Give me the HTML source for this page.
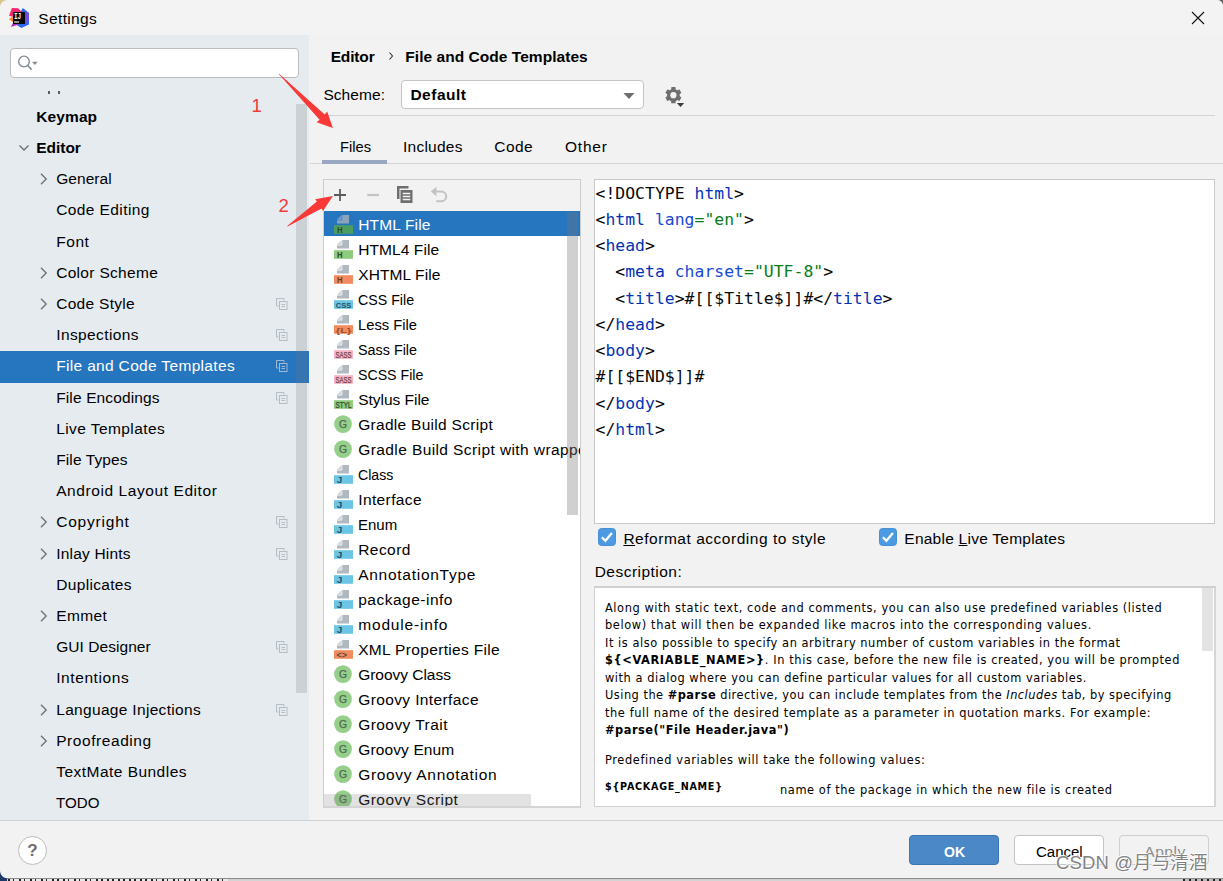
<!DOCTYPE html>
<html lang="en">
<head>
<meta charset="utf-8">
<title>Settings</title>
<style>
html,body{margin:0;padding:0}
body{width:1223px;height:881px;overflow:hidden;position:relative;background:#f2f2f2;font-family:"Liberation Sans",sans-serif;font-size:15.5px;color:#000}
.abs,.t,.i,.sel,.lsel,.cl{position:absolute}
.t{white-space:pre;display:block}
.i{display:block;overflow:visible}
#titlebar{left:0;top:0;width:1223px;height:35px;background:#f3f3f3}
#sidebar{left:0;top:35px;width:309px;height:785px;background:#e6ebf0;overflow:hidden}
#sbin{position:absolute;left:0;top:-35px;width:309px;height:881px}
.sel{left:0;width:309px;background:#2675bf}
#search{left:10px;top:48px;width:287px;height:28px;border:1px solid #bcbcbc;border-radius:4px;background:#fff}
#sbthumb{left:296px;top:104px;width:11px;height:589px;background:rgba(115,120,125,0.22)}
#footer{left:0;top:820px;width:1223px;height:58px;background:#f2f2f2;border-top:1px solid #d1d1d1;box-sizing:border-box}
#below{left:0;top:878px;width:1223px;height:3px;background:linear-gradient(#8c8c8c 0,#8c8c8c 1px,#cdcdcd 1px,#d6d6d6 3px)}
#listpanel{left:323px;top:179px;width:256px;height:626px;border:1px solid #cdcdcd;border-bottom:2px solid #d4d4d4;background:#f2f2f2;overflow:hidden;box-sizing:content-box}
#listbody{left:0;top:31px;width:256px;height:595px;background:#fff}
.lsel{left:0;width:256px;background:#2675bf}
#editor{left:594px;top:179px;width:619px;height:343px;border:1px solid #c9c9c9;background:#fff;overflow:hidden}
.cl{left:0.5px;height:26px;line-height:26px;white-space:pre;font-family:"DejaVu Sans Mono","Liberation Mono",monospace;font-size:16.4px;color:#080808;letter-spacing:0.03px}
#desc{left:594px;top:586px;width:619px;height:218px;border:1px solid #d2d2d2;border-top:2px solid #cfcfcf;border-right:2px solid #d6d6d6;background:#fff;overflow:hidden}
.d{position:absolute;left:10px;white-space:pre;font-family:"DejaVu Sans","Liberation Sans",sans-serif;font-size:11.4px;height:18px;line-height:18px;color:#000}
.btn{position:absolute;top:835px;width:88px;height:28px;border-radius:4px;border:1px solid #c4c4c4;background:#fff}
.cb{position:absolute;width:18px;height:18px;border-radius:3.5px;background:#4c9ae1;border:1px solid #4790d8;box-sizing:border-box}
</style>
</head>
<body>
<div id="titlebar" class="abs"></div>
<div id="sidebar" class="abs"><div id="sbin">
<div id="search" class="abs"></div>
<svg class="i" style="left:17px;top:54px" width="22" height="18" viewBox="0 0 22 18"><circle cx="7" cy="7.5" r="5.3" fill="none" stroke="#7f8b91" stroke-width="1.3"/><path d="M10.8 11.5 L14.6 15.6" stroke="#7f8b91" stroke-width="1.6"/><path d="M15 7.8 h5.6 l-2.8 3.2z" fill="#7f8b91"/></svg>
<div class="abs" style="left:48px;top:90.6px;width:2px;height:3px;background:#5c5c68"></div>
<div class="abs" style="left:58px;top:90.6px;width:2px;height:3px;background:#5c5c68"></div>
<span class="t" style="left:36.3px;top:105.00px;height:24px;line-height:24px;font-size:15.5px;font-weight:700;letter-spacing:0.097px;">Keymap</span>
<span class="t" style="left:36.3px;top:136.00px;height:24px;line-height:24px;font-size:15.5px;font-weight:700;letter-spacing:-0.036px;">Editor</span>
<svg class="i" style="left:17px;top:143.00px" width="14" height="10" viewBox="0 0 14 10"><path d="M2.5 2.5 L7 7 L11.5 2.5" fill="none" stroke="#6e6e6e" stroke-width="1.3"/></svg>
<span class="t" style="left:56.2px;top:167.00px;height:24px;line-height:24px;font-size:15.5px;letter-spacing:0.057px;">General</span>
<svg class="i" style="left:39px;top:172.00px" width="10" height="14" viewBox="0 0 10 14"><path d="M2 1.8 L7.2 7 L2 12.2" fill="none" stroke="#6e6e6e" stroke-width="1.3"/></svg>
<span class="t" style="left:56.2px;top:198.00px;height:24px;line-height:24px;font-size:15.5px;letter-spacing:0.403px;">Code Editing</span>
<span class="t" style="left:56.2px;top:230.00px;height:24px;line-height:24px;font-size:15.5px;letter-spacing:0.561px;">Font</span>
<span class="t" style="left:56.2px;top:261.00px;height:24px;line-height:24px;font-size:15.5px;letter-spacing:0.307px;">Color Scheme</span>
<svg class="i" style="left:39px;top:266.00px" width="10" height="14" viewBox="0 0 10 14"><path d="M2 1.8 L7.2 7 L2 12.2" fill="none" stroke="#6e6e6e" stroke-width="1.3"/></svg>
<span class="t" style="left:56.2px;top:292.00px;height:24px;line-height:24px;font-size:15.5px;letter-spacing:0.297px;">Code Style</span>
<svg class="i" style="left:39px;top:297.00px" width="10" height="14" viewBox="0 0 10 14"><path d="M2 1.8 L7.2 7 L2 12.2" fill="none" stroke="#6e6e6e" stroke-width="1.3"/></svg>
<svg class="i" style="left:276px;top:298.00px" width="12" height="12" viewBox="0 0 12 12"><path d="M0.5 0.5h7.5v2M0.5 0.5v7.5h2" fill="none" stroke="#b4bcc4" stroke-width="1"/><rect x="3.5" y="3.5" width="7.5" height="8" fill="none" stroke="#b4bcc4" stroke-width="1"/><path d="M5.5 6.5h3.5M5.5 8.5h3.5" stroke="#b4bcc4" stroke-width="1"/></svg>
<span class="t" style="left:56.2px;top:323.00px;height:24px;line-height:24px;font-size:15.5px;letter-spacing:0.398px;">Inspections</span>
<svg class="i" style="left:276px;top:329.00px" width="12" height="12" viewBox="0 0 12 12"><path d="M0.5 0.5h7.5v2M0.5 0.5v7.5h2" fill="none" stroke="#b4bcc4" stroke-width="1"/><rect x="3.5" y="3.5" width="7.5" height="8" fill="none" stroke="#b4bcc4" stroke-width="1"/><path d="M5.5 6.5h3.5M5.5 8.5h3.5" stroke="#b4bcc4" stroke-width="1"/></svg>
<div class="sel" style="top:351px;height:32px"></div>
<span class="t" style="left:56.2px;top:354.00px;height:24px;line-height:24px;font-size:15.5px;color:#fff;letter-spacing:0.332px;">File and Code Templates</span>
<svg class="i" style="left:276px;top:360.00px" width="12" height="12" viewBox="0 0 12 12"><path d="M0.5 0.5h7.5v2M0.5 0.5v7.5h2" fill="none" stroke="#9fb9d6" stroke-width="1"/><rect x="3.5" y="3.5" width="7.5" height="8" fill="none" stroke="#9fb9d6" stroke-width="1"/><path d="M5.5 6.5h3.5M5.5 8.5h3.5" stroke="#9fb9d6" stroke-width="1"/></svg>
<span class="t" style="left:56.2px;top:386.00px;height:24px;line-height:24px;font-size:15.5px;letter-spacing:0.133px;">File Encodings</span>
<svg class="i" style="left:276px;top:392.00px" width="12" height="12" viewBox="0 0 12 12"><path d="M0.5 0.5h7.5v2M0.5 0.5v7.5h2" fill="none" stroke="#b4bcc4" stroke-width="1"/><rect x="3.5" y="3.5" width="7.5" height="8" fill="none" stroke="#b4bcc4" stroke-width="1"/><path d="M5.5 6.5h3.5M5.5 8.5h3.5" stroke="#b4bcc4" stroke-width="1"/></svg>
<span class="t" style="left:56.2px;top:417.00px;height:24px;line-height:24px;font-size:15.5px;letter-spacing:0.422px;">Live Templates</span>
<span class="t" style="left:56.2px;top:448.00px;height:24px;line-height:24px;font-size:15.5px;letter-spacing:0.116px;">File Types</span>
<span class="t" style="left:56.2px;top:479.00px;height:24px;line-height:24px;font-size:15.5px;letter-spacing:0.581px;">Android Layout Editor</span>
<span class="t" style="left:56.2px;top:510.00px;height:24px;line-height:24px;font-size:15.5px;letter-spacing:0.795px;">Copyright</span>
<svg class="i" style="left:39px;top:515.00px" width="10" height="14" viewBox="0 0 10 14"><path d="M2 1.8 L7.2 7 L2 12.2" fill="none" stroke="#6e6e6e" stroke-width="1.3"/></svg>
<svg class="i" style="left:276px;top:516.00px" width="12" height="12" viewBox="0 0 12 12"><path d="M0.5 0.5h7.5v2M0.5 0.5v7.5h2" fill="none" stroke="#b4bcc4" stroke-width="1"/><rect x="3.5" y="3.5" width="7.5" height="8" fill="none" stroke="#b4bcc4" stroke-width="1"/><path d="M5.5 6.5h3.5M5.5 8.5h3.5" stroke="#b4bcc4" stroke-width="1"/></svg>
<span class="t" style="left:56.2px;top:542.00px;height:24px;line-height:24px;font-size:15.5px;letter-spacing:0.192px;">Inlay Hints</span>
<svg class="i" style="left:39px;top:547.00px" width="10" height="14" viewBox="0 0 10 14"><path d="M2 1.8 L7.2 7 L2 12.2" fill="none" stroke="#6e6e6e" stroke-width="1.3"/></svg>
<svg class="i" style="left:276px;top:548.00px" width="12" height="12" viewBox="0 0 12 12"><path d="M0.5 0.5h7.5v2M0.5 0.5v7.5h2" fill="none" stroke="#b4bcc4" stroke-width="1"/><rect x="3.5" y="3.5" width="7.5" height="8" fill="none" stroke="#b4bcc4" stroke-width="1"/><path d="M5.5 6.5h3.5M5.5 8.5h3.5" stroke="#b4bcc4" stroke-width="1"/></svg>
<span class="t" style="left:56.2px;top:573.00px;height:24px;line-height:24px;font-size:15.5px;letter-spacing:0.336px;">Duplicates</span>
<span class="t" style="left:56.2px;top:604.00px;height:24px;line-height:24px;font-size:15.5px;letter-spacing:0.352px;">Emmet</span>
<svg class="i" style="left:39px;top:609.00px" width="10" height="14" viewBox="0 0 10 14"><path d="M2 1.8 L7.2 7 L2 12.2" fill="none" stroke="#6e6e6e" stroke-width="1.3"/></svg>
<span class="t" style="left:56.2px;top:635.00px;height:24px;line-height:24px;font-size:15.5px;letter-spacing:0.054px;">GUI Designer</span>
<svg class="i" style="left:276px;top:641.00px" width="12" height="12" viewBox="0 0 12 12"><path d="M0.5 0.5h7.5v2M0.5 0.5v7.5h2" fill="none" stroke="#b4bcc4" stroke-width="1"/><rect x="3.5" y="3.5" width="7.5" height="8" fill="none" stroke="#b4bcc4" stroke-width="1"/><path d="M5.5 6.5h3.5M5.5 8.5h3.5" stroke="#b4bcc4" stroke-width="1"/></svg>
<span class="t" style="left:56.2px;top:666.00px;height:24px;line-height:24px;font-size:15.5px;letter-spacing:0.587px;">Intentions</span>
<span class="t" style="left:56.2px;top:698.00px;height:24px;line-height:24px;font-size:15.5px;letter-spacing:0.319px;">Language Injections</span>
<svg class="i" style="left:39px;top:703.00px" width="10" height="14" viewBox="0 0 10 14"><path d="M2 1.8 L7.2 7 L2 12.2" fill="none" stroke="#6e6e6e" stroke-width="1.3"/></svg>
<svg class="i" style="left:276px;top:704.00px" width="12" height="12" viewBox="0 0 12 12"><path d="M0.5 0.5h7.5v2M0.5 0.5v7.5h2" fill="none" stroke="#b4bcc4" stroke-width="1"/><rect x="3.5" y="3.5" width="7.5" height="8" fill="none" stroke="#b4bcc4" stroke-width="1"/><path d="M5.5 6.5h3.5M5.5 8.5h3.5" stroke="#b4bcc4" stroke-width="1"/></svg>
<span class="t" style="left:56.2px;top:729.00px;height:24px;line-height:24px;font-size:15.5px;letter-spacing:0.567px;">Proofreading</span>
<svg class="i" style="left:39px;top:734.00px" width="10" height="14" viewBox="0 0 10 14"><path d="M2 1.8 L7.2 7 L2 12.2" fill="none" stroke="#6e6e6e" stroke-width="1.3"/></svg>
<span class="t" style="left:56.2px;top:760.00px;height:24px;line-height:24px;font-size:15.5px;letter-spacing:0.472px;">TextMate Bundles</span>
<span class="t" style="left:56.2px;top:791.00px;height:24px;line-height:24px;font-size:15.5px;transform:scaleX(0.9753);transform-origin:0 50%;">TODO</span>
<div id="sbthumb" class="abs"></div>
</div></div>

<!-- title -->
<svg class="i" style="left:0;top:0" width="40" height="36" viewBox="0 0 40 36">

<path d="M11.9 8 L18 8.2 L21.4 11.6 L14 17 L9 15.7z" fill="#f7256b"/>
<path d="M9 19.2 L12.6 16.5 L13.5 22.3z" fill="#fb7a1d"/>
<path d="M10.8 27 L13 23 L19.5 24.3z" fill="#b32bb8"/>
<path d="M22.9 8 L29 13 L29 24.5 L21.3 28 L17 25.3 L20.8 11.5z" fill="#2f68ee"/><path d="M25 11.5 L29 13 L29 21 L25 23z" fill="#6a50e2"/>
<rect x="13" y="12" width="12" height="12" fill="#050505"/>
<text x="14" y="18.8" font-family="Liberation Mono, monospace" font-weight="700" font-size="8.4" fill="#fff" textLength="7.2" lengthAdjust="spacingAndGlyphs">IJ</text>
<rect x="14.1" y="21.3" width="4.9" height="1.4" fill="#cfcfcf"/>
<path d="M0 0 H7 C3 0.6 0.9 2.6 0 6z" fill="#d8c78e"/>
</svg>
<span class="t" style="left:38.3px;top:7.20px;height:24px;line-height:24px;font-size:15.5px;letter-spacing:0.355px;">Settings</span>
<svg class="i" style="left:1191px;top:11px" width="14" height="14" viewBox="0 0 14 14"><path d="M1 1 L13 13 M13 1 L1 13" stroke="#111" stroke-width="1.1" fill="none"/></svg>

<svg class="i" style="left:1218px;top:0" width="5" height="5" viewBox="0 0 5 5"><path d="M5 0 V5 C4.6 2.2 2.8 0.4 0 0z" fill="#5a5a5a"/></svg>
<!-- right header -->
<span class="t" style="left:330.7px;top:44.50px;height:24px;line-height:24px;font-size:15.5px;font-weight:700;letter-spacing:-0.156px;">Editor</span>
<svg class="i" style="left:387px;top:51px" width="8" height="10" viewBox="0 0 8 10"><path d="M2.5 1.5 L5.5 5 L2.5 8.5" fill="none" stroke="#333" stroke-width="1.1"/></svg>
<span class="t" style="left:405.3px;top:44.50px;height:24px;line-height:24px;font-size:15.5px;font-weight:700;letter-spacing:0.043px;">File and Code Templates</span>
<span class="t" style="left:323.4px;top:82.50px;height:24px;line-height:24px;font-size:15.5px;letter-spacing:0.071px;">Scheme:</span>
<div class="abs" style="left:401px;top:80px;width:241px;height:27px;border:1px solid #c4c4c4;border-radius:4px;background:#fff"></div>
<span class="t" style="left:410.4px;top:82.50px;height:24px;line-height:24px;font-size:15.5px;font-weight:700;letter-spacing:0.509px;">Default</span>
<svg class="i" style="left:622.3px;top:91.7px" width="14" height="8" viewBox="0 0 14 8"><path d="M1.5 1 h11 l-5.5 6z" fill="#6e6e6e"/></svg>
<svg class="i" style="left:664px;top:85px" width="22" height="24" viewBox="0 0 22 24">
<g transform="translate(9.4,10.2)" fill="#6e6e6e">
<circle r="6.3" />
<g><rect x="-2.2" y="-8.1" width="4.4" height="16.2" rx="0.6"/><rect x="-2.2" y="-8.1" width="4.4" height="16.2" rx="0.6" transform="rotate(60)"/><rect x="-2.2" y="-8.1" width="4.4" height="16.2" rx="0.6" transform="rotate(120)"/></g>
<circle r="3.1" fill="#f2f2f2"/>
</g>
<path d="M12.8 18 h7.4 l-3.7 4z" fill="#3c3c3c"/>
</svg>
<div class="abs" style="left:323px;top:115px;width:892px;height:1px;background:#d4d4d4"></div>

<!-- tabs -->
<span class="t" style="left:339.7px;top:134.50px;height:24px;line-height:24px;font-size:15.5px;transform:scaleX(0.9470);transform-origin:0 50%;">Files</span>
<span class="t" style="left:403.0px;top:134.50px;height:24px;line-height:24px;font-size:15.5px;letter-spacing:0.238px;">Includes</span>
<span class="t" style="left:494.3px;top:134.50px;height:24px;line-height:24px;font-size:15.5px;letter-spacing:0.412px;">Code</span>
<span class="t" style="left:565.0px;top:134.50px;height:24px;line-height:24px;font-size:15.5px;letter-spacing:0.784px;">Other</span>
<div class="abs" style="left:310px;top:163px;width:913px;height:1px;background:#d4d4d4"></div>
<div class="abs" style="left:322px;top:160px;width:65px;height:4px;background:#99a7c2"></div>

<!-- list panel -->
<div id="listpanel" class="abs">
<svg class="i" style="left:8px;top:7px" width="16" height="16" viewBox="0 0 16 16"><path d="M8 2v12M2 8h12" stroke="#5c5c5c" stroke-width="1.8"/></svg>
<svg class="i" style="left:41px;top:7px" width="16" height="16" viewBox="0 0 16 16"><path d="M2.2 8h11.8" stroke="#c3c3c3" stroke-width="2.2"/></svg>
<svg class="i" style="left:71.7px;top:5px" width="18" height="19" viewBox="0 0 18 19"><path d="M1 1h11.5v2.5h-9v10.5h-2.5z" fill="#6e6e6e"/><rect x="4.5" y="5" width="12" height="13" fill="#6e6e6e"/><path d="M6.7 8.5h7.6M6.7 11.5h7.6M6.7 14.5h7.6" stroke="#f2f2f2" stroke-width="1.3"/></svg>
<svg class="i" style="left:106px;top:5px" width="20" height="20" viewBox="0 0 20 20"><path d="M6 6.5 H11.3 a4.9 4.9 0 0 1 0 9.8 H6.2" fill="none" stroke="#c3c3c3" stroke-width="2.1"/><path d="M0.8 6.5 L6.4 1.8 V11.2z" fill="#c3c3c3"/></svg>
<div id="listbody" class="abs"></div>
<div class="lsel" style="top:31px;height:25px"></div>
<span class="t" style="left:34.2px;top:32.60px;height:24px;line-height:24px;font-size:15.5px;color:#fff;letter-spacing:0.174px;">HTML File</span>
<svg class="i" style="left:10px;top:35.2px" width="19" height="19" viewBox="0 0 19 19"><path d="M8 0h7v8.4h-12v-3.4z" fill="#8aa4bb"/><path d="M7.4 0.2v4.4h-4.4z" fill="#6a9aca"/><path d="M7.9 0v5.1h-4.9" fill="none" stroke="#3f84c6" stroke-width="0.8"/><rect x="0" y="10.2" width="19" height="8.6" fill="#4c9e5f"/><text x="3.0" y="17.7" font-family="Liberation Sans, sans-serif" font-weight="700" font-size="8.6" fill="#2e4a30" stroke="#2e4a30" stroke-width="0" textLength="5.6" lengthAdjust="spacingAndGlyphs">H</text></svg>
<span class="t" style="left:34.2px;top:57.60px;height:24px;line-height:24px;font-size:15.5px;letter-spacing:0.088px;">HTML4 File</span>
<svg class="i" style="left:10px;top:60.2px" width="19" height="19" viewBox="0 0 19 19"><path d="M8 0h7v8.4h-12v-3.4z" fill="#b0b8c0"/><path d="M7.4 0.2v4.4h-4.4z" fill="#d6dade"/><path d="M7.9 0v5.1h-4.9" fill="none" stroke="#fff" stroke-width="0.8"/><rect x="0" y="10.2" width="19" height="8.6" fill="#8fcb7c"/><text x="3.0" y="17.7" font-family="Liberation Sans, sans-serif" font-weight="700" font-size="8.6" fill="#2e4a30" stroke="#2e4a30" stroke-width="0" textLength="5.6" lengthAdjust="spacingAndGlyphs">H</text></svg>
<span class="t" style="left:34.2px;top:82.60px;height:24px;line-height:24px;font-size:15.5px;letter-spacing:0.106px;">XHTML File</span>
<svg class="i" style="left:10px;top:85.2px" width="19" height="19" viewBox="0 0 19 19"><path d="M8 0h7v8.4h-12v-3.4z" fill="#b0b8c0"/><path d="M7.4 0.2v4.4h-4.4z" fill="#d6dade"/><path d="M7.9 0v5.1h-4.9" fill="none" stroke="#fff" stroke-width="0.8"/><rect x="0" y="10.2" width="19" height="8.6" fill="#f28b5e"/><text x="3.0" y="17.7" font-family="Liberation Sans, sans-serif" font-weight="700" font-size="8.6" fill="#6e3a22" stroke="#6e3a22" stroke-width="0" textLength="5.6" lengthAdjust="spacingAndGlyphs">H</text></svg>
<span class="t" style="left:34.2px;top:107.60px;height:24px;line-height:24px;font-size:15.5px;transform:scaleX(0.9173);transform-origin:0 50%;">CSS File</span>
<svg class="i" style="left:10px;top:110.2px" width="19" height="19" viewBox="0 0 19 19"><path d="M8 0h7v8.4h-12v-3.4z" fill="#b0b8c0"/><path d="M7.4 0.2v4.4h-4.4z" fill="#d6dade"/><path d="M7.9 0v5.1h-4.9" fill="none" stroke="#fff" stroke-width="0.8"/><rect x="0" y="10.2" width="19" height="8.6" fill="#6cc5e4"/><text x="1.8" y="17.7" font-family="Liberation Sans, sans-serif" font-weight="700" font-size="7.3" fill="#255163" stroke="#255163" stroke-width="0" textLength="15.6" lengthAdjust="spacingAndGlyphs">CSS</text></svg>
<span class="t" style="left:34.2px;top:132.60px;height:24px;line-height:24px;font-size:15.5px;transform:scaleX(0.9511);transform-origin:0 50%;">Less File</span>
<svg class="i" style="left:10px;top:135.2px" width="19" height="19" viewBox="0 0 19 19"><path d="M8 0h7v8.4h-12v-3.4z" fill="#b0b8c0"/><path d="M7.4 0.2v4.4h-4.4z" fill="#d6dade"/><path d="M7.9 0v5.1h-4.9" fill="none" stroke="#fff" stroke-width="0.8"/><rect x="0" y="10.2" width="19" height="8.6" fill="#f28b5e"/><text x="1.8" y="17.7" font-family="Liberation Sans, sans-serif" font-weight="700" font-size="7.3" fill="#a04f2a" stroke="#a04f2a" stroke-width="0" textLength="15.6" lengthAdjust="spacingAndGlyphs">{L}</text></svg>
<span class="t" style="left:34.2px;top:157.60px;height:24px;line-height:24px;font-size:15.5px;transform:scaleX(0.9255);transform-origin:0 50%;">Sass File</span>
<svg class="i" style="left:10px;top:160.2px" width="19" height="19" viewBox="0 0 19 19"><path d="M8 0h7v8.4h-12v-3.4z" fill="#b0b8c0"/><path d="M7.4 0.2v4.4h-4.4z" fill="#d6dade"/><path d="M7.9 0v5.1h-4.9" fill="none" stroke="#fff" stroke-width="0.8"/><rect x="0" y="10.2" width="19" height="8.6" fill="#f8b4c6"/><text x="1.6" y="17.7" font-family="Liberation Sans, sans-serif" font-weight="400" font-size="8.8" fill="#6a4450" stroke="#6a4450" stroke-width="0.25" textLength="16" lengthAdjust="spacingAndGlyphs">SASS</text></svg>
<span class="t" style="left:34.2px;top:182.60px;height:24px;line-height:24px;font-size:15.5px;transform:scaleX(0.9133);transform-origin:0 50%;">SCSS File</span>
<svg class="i" style="left:10px;top:185.2px" width="19" height="19" viewBox="0 0 19 19"><path d="M8 0h7v8.4h-12v-3.4z" fill="#b0b8c0"/><path d="M7.4 0.2v4.4h-4.4z" fill="#d6dade"/><path d="M7.9 0v5.1h-4.9" fill="none" stroke="#fff" stroke-width="0.8"/><rect x="0" y="10.2" width="19" height="8.6" fill="#f8b4c6"/><text x="1.6" y="17.7" font-family="Liberation Sans, sans-serif" font-weight="400" font-size="8.8" fill="#6a4450" stroke="#6a4450" stroke-width="0.25" textLength="16" lengthAdjust="spacingAndGlyphs">SASS</text></svg>
<span class="t" style="left:34.2px;top:207.60px;height:24px;line-height:24px;font-size:15.5px;letter-spacing:-0.02px;">Stylus File</span>
<svg class="i" style="left:10px;top:210.2px" width="19" height="19" viewBox="0 0 19 19"><path d="M8 0h7v8.4h-12v-3.4z" fill="#b0b8c0"/><path d="M7.4 0.2v4.4h-4.4z" fill="#d6dade"/><path d="M7.9 0v5.1h-4.9" fill="none" stroke="#fff" stroke-width="0.8"/><rect x="0" y="10.2" width="19" height="8.6" fill="#8fcb7c"/><text x="1.6" y="17.7" font-family="Liberation Sans, sans-serif" font-weight="400" font-size="8.8" fill="#2e4a30" stroke="#2e4a30" stroke-width="0.25" textLength="16" lengthAdjust="spacingAndGlyphs">STYL</text></svg>
<span class="t" style="left:34.2px;top:232.60px;height:24px;line-height:24px;font-size:15.5px;letter-spacing:0.293px;">Gradle Build Script</span>
<svg class="i" style="left:10px;top:235px" width="18" height="18" viewBox="0 0 18 18"><circle cx="9" cy="9.1" r="8.9" fill="#95cf8a"/><text x="9" y="12.9" text-anchor="middle" font-family="Liberation Sans, sans-serif" font-size="10.4" fill="#4f6b52" stroke="#4f6b52" stroke-width="0.25">G</text></svg>
<span class="t" style="left:34.2px;top:257.60px;height:24px;line-height:24px;font-size:15.5px;letter-spacing:0.409px">Gradle Build Script with wrapper</span>
<svg class="i" style="left:10px;top:260px" width="18" height="18" viewBox="0 0 18 18"><circle cx="9" cy="9.1" r="8.9" fill="#95cf8a"/><text x="9" y="12.9" text-anchor="middle" font-family="Liberation Sans, sans-serif" font-size="10.4" fill="#4f6b52" stroke="#4f6b52" stroke-width="0.25">G</text></svg>
<span class="t" style="left:34.2px;top:282.60px;height:24px;line-height:24px;font-size:15.5px;transform:scaleX(0.9106);transform-origin:0 50%;">Class</span>
<svg class="i" style="left:10px;top:285.2px" width="19" height="19" viewBox="0 0 19 19"><path d="M8 0h7v8.4h-12v-3.4z" fill="#b0b8c0"/><path d="M7.4 0.2v4.4h-4.4z" fill="#d6dade"/><path d="M7.9 0v5.1h-4.9" fill="none" stroke="#fff" stroke-width="0.8"/><rect x="0" y="10.2" width="19" height="8.6" fill="#6cc5e4"/><text x="2.8" y="17.7" font-family="Liberation Sans, sans-serif" font-weight="700" font-size="8.6" fill="#255163" stroke="#255163" stroke-width="0" textLength="5.6" lengthAdjust="spacingAndGlyphs">J</text></svg>
<span class="t" style="left:34.2px;top:307.60px;height:24px;line-height:24px;font-size:15.5px;letter-spacing:0.386px;">Interface</span>
<svg class="i" style="left:10px;top:310.2px" width="19" height="19" viewBox="0 0 19 19"><path d="M8 0h7v8.4h-12v-3.4z" fill="#b0b8c0"/><path d="M7.4 0.2v4.4h-4.4z" fill="#d6dade"/><path d="M7.9 0v5.1h-4.9" fill="none" stroke="#fff" stroke-width="0.8"/><rect x="0" y="10.2" width="19" height="8.6" fill="#6cc5e4"/><text x="2.8" y="17.7" font-family="Liberation Sans, sans-serif" font-weight="700" font-size="8.6" fill="#255163" stroke="#255163" stroke-width="0" textLength="5.6" lengthAdjust="spacingAndGlyphs">J</text></svg>
<span class="t" style="left:34.2px;top:332.60px;height:24px;line-height:24px;font-size:15.5px;transform:scaleX(0.9679);transform-origin:0 50%;">Enum</span>
<svg class="i" style="left:10px;top:335.2px" width="19" height="19" viewBox="0 0 19 19"><path d="M8 0h7v8.4h-12v-3.4z" fill="#b0b8c0"/><path d="M7.4 0.2v4.4h-4.4z" fill="#d6dade"/><path d="M7.9 0v5.1h-4.9" fill="none" stroke="#fff" stroke-width="0.8"/><rect x="0" y="10.2" width="19" height="8.6" fill="#6cc5e4"/><text x="2.8" y="17.7" font-family="Liberation Sans, sans-serif" font-weight="700" font-size="8.6" fill="#255163" stroke="#255163" stroke-width="0" textLength="5.6" lengthAdjust="spacingAndGlyphs">J</text></svg>
<span class="t" style="left:34.2px;top:357.60px;height:24px;line-height:24px;font-size:15.5px;letter-spacing:0.446px;">Record</span>
<svg class="i" style="left:10px;top:360.2px" width="19" height="19" viewBox="0 0 19 19"><path d="M8 0h7v8.4h-12v-3.4z" fill="#b0b8c0"/><path d="M7.4 0.2v4.4h-4.4z" fill="#d6dade"/><path d="M7.9 0v5.1h-4.9" fill="none" stroke="#fff" stroke-width="0.8"/><rect x="0" y="10.2" width="19" height="8.6" fill="#6cc5e4"/><text x="2.8" y="17.7" font-family="Liberation Sans, sans-serif" font-weight="700" font-size="8.6" fill="#255163" stroke="#255163" stroke-width="0" textLength="5.6" lengthAdjust="spacingAndGlyphs">J</text></svg>
<span class="t" style="left:34.2px;top:382.60px;height:24px;line-height:24px;font-size:15.5px;letter-spacing:0.728px;">AnnotationType</span>
<svg class="i" style="left:10px;top:385.2px" width="19" height="19" viewBox="0 0 19 19"><path d="M8 0h7v8.4h-12v-3.4z" fill="#b0b8c0"/><path d="M7.4 0.2v4.4h-4.4z" fill="#d6dade"/><path d="M7.9 0v5.1h-4.9" fill="none" stroke="#fff" stroke-width="0.8"/><rect x="0" y="10.2" width="19" height="8.6" fill="#6cc5e4"/><text x="2.8" y="17.7" font-family="Liberation Sans, sans-serif" font-weight="700" font-size="8.6" fill="#255163" stroke="#255163" stroke-width="0" textLength="5.6" lengthAdjust="spacingAndGlyphs">J</text></svg>
<span class="t" style="left:34.2px;top:407.60px;height:24px;line-height:24px;font-size:15.5px;letter-spacing:0.503px;">package-info</span>
<svg class="i" style="left:10px;top:410.2px" width="19" height="19" viewBox="0 0 19 19"><path d="M8 0h7v8.4h-12v-3.4z" fill="#b0b8c0"/><path d="M7.4 0.2v4.4h-4.4z" fill="#d6dade"/><path d="M7.9 0v5.1h-4.9" fill="none" stroke="#fff" stroke-width="0.8"/><rect x="0" y="10.2" width="19" height="8.6" fill="#6cc5e4"/><text x="2.8" y="17.7" font-family="Liberation Sans, sans-serif" font-weight="700" font-size="8.6" fill="#255163" stroke="#255163" stroke-width="0" textLength="5.6" lengthAdjust="spacingAndGlyphs">J</text></svg>
<span class="t" style="left:34.2px;top:432.60px;height:24px;line-height:24px;font-size:15.5px;letter-spacing:0.83px;">module-info</span>
<svg class="i" style="left:10px;top:435.2px" width="19" height="19" viewBox="0 0 19 19"><path d="M8 0h7v8.4h-12v-3.4z" fill="#b0b8c0"/><path d="M7.4 0.2v4.4h-4.4z" fill="#d6dade"/><path d="M7.9 0v5.1h-4.9" fill="none" stroke="#fff" stroke-width="0.8"/><rect x="0" y="10.2" width="19" height="8.6" fill="#6cc5e4"/><text x="2.8" y="17.7" font-family="Liberation Sans, sans-serif" font-weight="700" font-size="8.6" fill="#255163" stroke="#255163" stroke-width="0" textLength="5.6" lengthAdjust="spacingAndGlyphs">J</text></svg>
<span class="t" style="left:34.2px;top:457.60px;height:24px;line-height:24px;font-size:15.5px;letter-spacing:0.332px;">XML Properties File</span>
<svg class="i" style="left:10px;top:460.2px" width="19" height="19" viewBox="0 0 19 19"><path d="M8 0h7v8.4h-12v-3.4z" fill="#b0b8c0"/><path d="M7.4 0.2v4.4h-4.4z" fill="#d6dade"/><path d="M7.9 0v5.1h-4.9" fill="none" stroke="#fff" stroke-width="0.8"/><rect x="0" y="10.2" width="19" height="8.6" fill="#f28b5e"/><text x="2.6" y="17.7" font-family="Liberation Sans, sans-serif" font-weight="700" font-size="8.6" fill="#5e4a42" stroke="#5e4a42" stroke-width="0" textLength="10.5" lengthAdjust="spacingAndGlyphs">&lt;&gt;</text></svg>
<span class="t" style="left:34.2px;top:482.60px;height:24px;line-height:24px;font-size:15.5px;letter-spacing:-0.03px;">Groovy Class</span>
<svg class="i" style="left:10px;top:485px" width="18" height="18" viewBox="0 0 18 18"><circle cx="9" cy="9.1" r="8.9" fill="#95cf8a"/><text x="9" y="12.9" text-anchor="middle" font-family="Liberation Sans, sans-serif" font-size="10.4" fill="#4f6b52" stroke="#4f6b52" stroke-width="0.25">G</text></svg>
<span class="t" style="left:34.2px;top:507.60px;height:24px;line-height:24px;font-size:15.5px;letter-spacing:0.388px;">Groovy Interface</span>
<svg class="i" style="left:10px;top:510px" width="18" height="18" viewBox="0 0 18 18"><circle cx="9" cy="9.1" r="8.9" fill="#95cf8a"/><text x="9" y="12.9" text-anchor="middle" font-family="Liberation Sans, sans-serif" font-size="10.4" fill="#4f6b52" stroke="#4f6b52" stroke-width="0.25">G</text></svg>
<span class="t" style="left:34.2px;top:532.60px;height:24px;line-height:24px;font-size:15.5px;letter-spacing:0.443px;">Groovy Trait</span>
<svg class="i" style="left:10px;top:535px" width="18" height="18" viewBox="0 0 18 18"><circle cx="9" cy="9.1" r="8.9" fill="#95cf8a"/><text x="9" y="12.9" text-anchor="middle" font-family="Liberation Sans, sans-serif" font-size="10.4" fill="#4f6b52" stroke="#4f6b52" stroke-width="0.25">G</text></svg>
<span class="t" style="left:34.2px;top:557.60px;height:24px;line-height:24px;font-size:15.5px;letter-spacing:0.133px;">Groovy Enum</span>
<svg class="i" style="left:10px;top:560px" width="18" height="18" viewBox="0 0 18 18"><circle cx="9" cy="9.1" r="8.9" fill="#95cf8a"/><text x="9" y="12.9" text-anchor="middle" font-family="Liberation Sans, sans-serif" font-size="10.4" fill="#4f6b52" stroke="#4f6b52" stroke-width="0.25">G</text></svg>
<span class="t" style="left:34.2px;top:582.60px;height:24px;line-height:24px;font-size:15.5px;letter-spacing:0.679px;">Groovy Annotation</span>
<svg class="i" style="left:10px;top:585px" width="18" height="18" viewBox="0 0 18 18"><circle cx="9" cy="9.1" r="8.9" fill="#95cf8a"/><text x="9" y="12.9" text-anchor="middle" font-family="Liberation Sans, sans-serif" font-size="10.4" fill="#4f6b52" stroke="#4f6b52" stroke-width="0.25">G</text></svg>
<span class="t" style="left:34.2px;top:607.60px;height:24px;line-height:24px;font-size:15.5px;letter-spacing:0.484px;">Groovy Script</span>
<svg class="i" style="left:10px;top:610px" width="18" height="18" viewBox="0 0 18 18"><circle cx="9" cy="9.1" r="8.9" fill="#95cf8a"/><text x="9" y="12.9" text-anchor="middle" font-family="Liberation Sans, sans-serif" font-size="10.4" fill="#4f6b52" stroke="#4f6b52" stroke-width="0.25">G</text></svg>
<div class="abs" style="left:243px;top:32px;width:11px;height:303px;background:rgba(117,117,117,0.34)"></div>
<div class="abs" style="left:0;top:614px;width:207px;height:12px;background:rgba(117,117,117,0.21)"></div>
</div>

<!-- editor -->
<div id="editor" class="abs">
<div class="cl" style="top:1px">&lt;!DOCTYPE <span style="color:#0033b3">html</span>&gt;</div>
<div class="cl" style="top:27px">&lt;<span style="color:#0033b3">html</span> <span style="color:#174ad4">lang</span><span style="color:#067d17">=&quot;en&quot;</span>&gt;</div>
<div class="cl" style="top:53px">&lt;<span style="color:#0033b3">head</span>&gt;</div>
<div class="cl" style="top:79px">  &lt;<span style="color:#0033b3">meta</span> <span style="color:#174ad4">charset</span><span style="color:#067d17">=&quot;UTF-8&quot;</span>&gt;</div>
<div class="cl" style="top:106px">  &lt;<span style="color:#0033b3">title</span>&gt;#[[$Title$]]#&lt;/<span style="color:#0033b3">title</span>&gt;</div>
<div class="cl" style="top:132px">&lt;/<span style="color:#0033b3">head</span>&gt;</div>
<div class="cl" style="top:158px">&lt;<span style="color:#0033b3">body</span>&gt;</div>
<div class="cl" style="top:184px">#[[$END$]]#</div>
<div class="cl" style="top:211px">&lt;/<span style="color:#0033b3">body</span>&gt;</div>
<div class="cl" style="top:237px">&lt;/<span style="color:#0033b3">html</span>&gt;</div>
</div>

<!-- checkboxes -->
<div class="cb" style="left:597.6px;top:528px"></div>
<svg class="i" style="left:597.6px;top:528px" width="18" height="18" viewBox="0 0 18 18"><path d="M3.9 9.2 L7.4 12.8 L13.9 4.9" fill="none" stroke="#fff" stroke-width="2.3"/></svg>
<span class="t" style="left:623.4px;top:527.30px;height:24px;line-height:24px;font-size:15.5px;letter-spacing:0.524px;"><u>R</u>eformat according to style</span>
<div class="cb" style="left:878.8px;top:528px"></div>
<svg class="i" style="left:878.8px;top:528px" width="18" height="18" viewBox="0 0 18 18"><path d="M3.9 9.2 L7.4 12.8 L13.9 4.9" fill="none" stroke="#fff" stroke-width="2.3"/></svg>
<span class="t" style="left:904.3px;top:527.30px;height:24px;line-height:24px;font-size:15.5px;letter-spacing:0.246px;">Enable <u>L</u>ive Templates</span>
<span class="t" style="left:594.7px;top:559.50px;height:24px;line-height:24px;font-size:15.5px;letter-spacing:0.469px;">Description:</span>

<!-- description -->
<div id="desc" class="abs">
<div class="d" style="top:10.76px;left:10px;letter-spacing:0.571px;">Along with static text, code and comments, you can also use predefined variables (listed</div>
<div class="d" style="top:28.06px;left:10px;letter-spacing:0.614px;">below) that will then be expanded like macros into the corresponding values.</div>
<div class="d" style="top:45.76px;left:10px;letter-spacing:0.554px;">It is also possible to specify an arbitrary number of custom variables in the format</div>
<div class="d" style="top:62.96px;left:10px;letter-spacing:0.609px;"><b>${&lt;VARIABLE_NAME&gt;}</b>. In this case, before the new file is created, you will be prompted</div>
<div class="d" style="top:80.66px;left:10px;letter-spacing:0.542px;">with a dialog where you can define particular values for all custom variables.</div>
<div class="d" style="top:98.06px;left:10px;letter-spacing:0.487px;">Using the <b>#parse</b> directive, you can include templates from the <i>Includes</i> tab, by specifying</div>
<div class="d" style="top:115.86px;left:10px;letter-spacing:0.578px;">the full name of the desired template as a parameter in quotation marks. For example:</div>
<div class="d" style="top:133.06px;left:10px;letter-spacing:0.507px;"><b>#parse("File Header.java")</b></div>
<div class="d" style="top:162.66px;left:10px;letter-spacing:0.607px;">Predefined variables will take the following values:</div>
<div class="d" style="top:189.68px;left:10px;letter-spacing:0.743px;font-size:9.6px;font-weight:700;">${PACKAGE_NAME}</div>
<div class="d" style="top:192.56px;left:185px;letter-spacing:0.59px;">name of the package in which the new file is created</div>
<div class="abs" style="left:606.5px;top:0;width:11px;height:62.5px;background:#e3e3e3"></div>
</div>

<!-- annotations -->
<svg class="i" style="left:0;top:0;z-index:20" width="400" height="260" viewBox="0 0 400 260"><polygon points="279.1,73.7 324.7,114.6 327.2,111.6 332.9,127.9 316.6,122.2 319.6,119.7 278.7,74.1" fill="#f93838"/><polygon points="287.2,226.1 316.9,201.6 315.1,199.3 332.9,196.0 323.0,211.1 321.6,208.6 287.6,226.5" fill="#f93838"/></svg>
<span class="t" style="left:251.5px;top:93.5px;height:24px;line-height:24px;font-size:18.5px;color:#f23a3a;z-index:20">1</span>
<span class="t" style="left:278.5px;top:193.5px;height:24px;line-height:24px;font-size:18.5px;color:#f23a3a;z-index:20">2</span>
<!-- footer -->
<div id="footer" class="abs"></div>
<div class="abs" style="left:18px;top:836px;width:27px;height:27px;border:1px solid #bdbdbd;border-radius:50%;background:#fff"></div>
<span class="t" style="left:27.3px;top:838.50px;height:24px;line-height:24px;font-size:17.0px;font-weight:700;color:#6e6e6e;">?</span>
<div class="btn" style="left:909px;background:#4a88c7;border-color:#3d75b2"></div>
<span class="t" style="left:943.6px;top:840.30px;height:24px;line-height:24px;font-size:15.5px;font-weight:700;color:#fff;transform:scaleX(0.9075);transform-origin:0 50%;">OK</span>
<div class="btn" style="left:1014px"></div>
<span class="t" style="left:1035.5px;top:840.30px;height:24px;line-height:24px;font-size:15.5px;transform:scaleX(0.9679);transform-origin:0 50%;">Cancel</span>
<div class="btn" style="left:1119px;border-color:#cfcfcf;background:#f2f2f2"></div>
<span class="t" style="left:1144.3px;top:840.30px;height:24px;line-height:24px;font-size:15.5px;color:#8c8c8c;letter-spacing:0.555px;">Apply</span>
<span class="t" style="left:1056px;top:849.5px;height:26px;line-height:26px;font-size:18.5px;letter-spacing:0.12px;color:#828282;text-shadow:0 0 1.5px #fff,0 0 1.5px #fff,0.6px 0.6px 0 #fff,-0.6px -0.6px 0 #fff;font-family:'Liberation Sans','Noto Sans CJK SC',sans-serif">CSDN @月与清酒</span>
<div id="below" class="abs"></div>
<div class="abs" style="left:8px;top:879px;width:220px;height:2px;background:repeating-linear-gradient(90deg,#222 0,#222 2px,#e8e8e8 2px,#e8e8e8 5px,#222 5px,#222 6.5px,#e8e8e8 6.5px,#e8e8e8 11px)"></div>
<div class="abs" style="left:1183px;top:879px;width:40px;height:2px;background:repeating-linear-gradient(90deg,#222 0,#222 2px,#bbb 2px,#bbb 6px)"></div>
<svg class="i" style="left:0;top:871px" width="8" height="10" viewBox="0 0 8 10"><path d="M0 0 C0.5 4 2.5 6.5 7 7.4 V10 H0z" fill="#1d3a66"/></svg>
</body>
</html>
